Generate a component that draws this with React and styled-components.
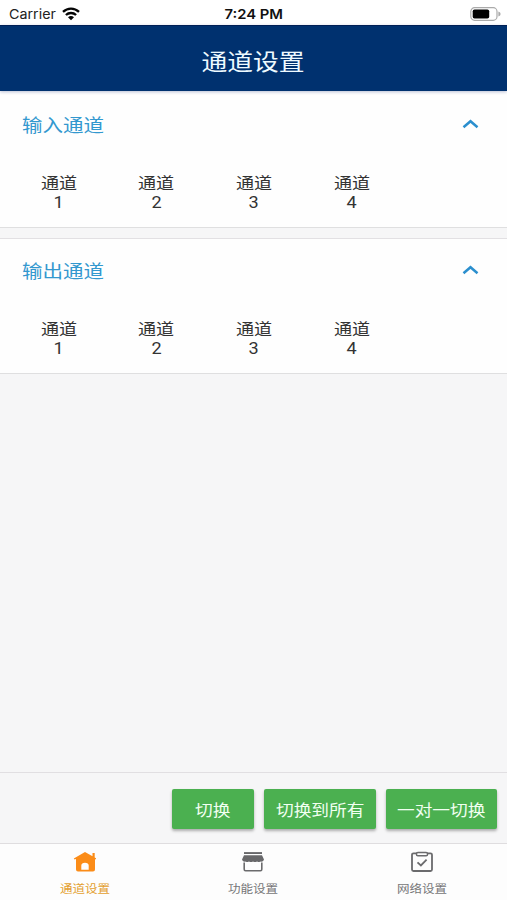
import React from "react";
import styled, { createGlobalStyle } from "styled-components";

const GlobalStyle = createGlobalStyle`
  * { box-sizing: border-box; }
  body {
    margin: 0;
    background: #f6f6f7;
    font-family: Roboto, "Noto Sans CJK SC", sans-serif;
  }
`;

const Screen = styled.div`
  display: flex;
  flex-direction: column;
  width: 100%;
  height: 900px;
  overflow: hidden;
  background: #f6f6f7;
`;

/* Wide-set lettering used across the app */
const Label = styled.span`
  display: block;
  white-space: nowrap;
  font-size: ${(p) => p.$size}px;
  line-height: ${(p) => p.$line || 20}px;
  font-weight: ${(p) => p.$weight || 400};
  transform: scaleX(${(p) => p.$stretch || 1.13});
  transform-origin: ${(p) => p.$origin || "center"};
`;

const StatusBar = styled.div`
  display: grid;
  grid-template-columns: 1fr auto 1fr;
  align-items: center;
  height: 25px;
  padding: 2px 6px 0 9px;
  background: #fff;
  color: #222;
  font-family: Inter, sans-serif;
`;

const Carrier = styled.div`
  display: flex;
  align-items: center;
  gap: 10px;
`;

const Clock = styled.div`
  padding-right: 2px;
  color: #111;
`;

const Battery = styled.div`
  display: flex;
  justify-content: flex-end;
`;

const Header = styled.header`
  display: flex;
  align-items: center;
  justify-content: center;
  height: 66px;
  padding-top: 6px;
  background: #00316f;
  border-top: 1px solid #001f55;
  box-shadow: 0 1px 3px rgba(30, 50, 120, 0.3);
  color: #eefaff;
  z-index: 1;
`;

const Content = styled.main`
  flex: 1;
  display: flex;
  flex-direction: column;
  gap: 10px;
`;

const Panel = styled.section`
  height: ${(p) => p.$height}px;
  background: #fefefe;
  border-bottom: 1px solid #dfdfe0;
  border-top: ${(p) => (p.$ruled ? "1px solid #e2e0e3" : "0")};
`;

const PanelHead = styled.div`
  display: flex;
  align-items: center;
  justify-content: space-between;
  height: 66px;
  margin-top: ${(p) => (p.$ruled ? -2 : 0)}px;
  padding: 0 28px 0 22px;
  color: #3398cf;
`;

const PanelTitle = styled.h2`
  margin: 0;
  padding-top: 3px;
  font-weight: 400;
`;

const Channels = styled.div`
  display: grid;
  grid-template-columns: repeat(4, 97.6px);
  padding: 17px 0 0 10px;
  color: #333;
`;

const Channel = styled.div`
  display: flex;
  flex-direction: column;
  align-items: center;
`;

const Actions = styled.div`
  display: flex;
  justify-content: flex-end;
  gap: 10px;
  height: 71px;
  padding: 16px 10px 0;
  border-top: 1px solid #e1dfe2;
`;

const ActionButton = styled.button`
  display: flex;
  align-items: center;
  justify-content: center;
  width: ${(p) => p.$width}px;
  height: 40px;
  padding: 4px 0 0;
  border: 0;
  border-radius: 2px;
  background: #4bb050;
  box-shadow: 0 2px 3px rgba(0, 0, 0, 0.3);
  color: #f1fff1;
  font-family: inherit;
`;

const TabBar = styled.nav`
  display: grid;
  grid-template-columns: repeat(3, 1fr);
  height: 57px;
  padding-top: 7px;
  background: #fdfdfd;
  border-top: 1px solid #dfdddf;
`;

const Tab = styled.div`
  display: flex;
  flex-direction: column;
  align-items: center;
  gap: 10px;
  padding-right: ${(p) => (p.$active ? 0 : 1)}px;
  color: ${(p) => (p.$active ? "#e3a02f" : "#767678")};
`;

const WifiIcon = () => (
  <svg width="18" height="14" viewBox="0 0 18 14" fill="none" stroke="#050505" strokeWidth="2.3">
    <path d="M1 4.9C5.6 .5 12.4 .5 17 4.9" />
    <path d="M3.9 8C6.8 5.3 11.2 5.3 14.1 8" />
    <path d="M9 13.2 6 10.2Q9 7.8 12 10.2Z" fill="#050505" stroke="none" />
  </svg>
);

const BatteryIcon = () => (
  <svg width="31" height="14" viewBox="0 0 31 14">
    <rect x=".8" y=".7" width="26.2" height="12.6" rx="3.8" fill="#fff" stroke="#aaa" strokeWidth="1.2" />
    <rect x="2.7" y="2.4" width="16.5" height="9.2" rx="1.8" fill="#000" />
    <path d="M28.4 4.6Q30.6 5.2 30.6 7T28.4 9.4Z" fill="#aaa" />
  </svg>
);

const ChevronUp = () => (
  <svg width="17" height="10" viewBox="0 0 17 10" fill="none" stroke="#2b8fce" strokeWidth="2.5">
    <path d="m1.5 8.2 7-6 7 6" />
  </svg>
);

const HomeIcon = () => (
  <svg width="24" height="22" viewBox="0 0 24 22">
    <path
      d="M12 1 .8 7.4 1.5 8.6 3 8V18.5Q3 20.5 5 20.5H20Q22 20.5 22 18.5V8L23 8.5V7.2L21.7 6.5V2H19.5V5.2ZM8.3 18.8V14.5Q8.5 11.7 12 11.7T15.7 14.5V18.8Z"
      fill="#fb8c18"
      fillRule="evenodd"
    />
  </svg>
);

const StoreIcon = () => (
  <svg width="24" height="22" viewBox="0 0 24 22">
    <path d="M3 1.1H21V3H3Z" fill="#68686a" />
    <path d="M3 4.2H21L23 8.6Q22.4 11 20 10.6 18.2 11.6 16 10.5 14 11.6 12 10.5 10 11.6 8 10.5 5.8 11.6 4 10.6 1.6 11 1 8.6Z" fill="#68686a" />
    <path d="M3.2 11.5V18.2Q3.2 19.7 4.5 19.7H19.5Q20.8 19.7 20.8 18.2V11.5" fill="none" stroke="#6b6b6d" strokeWidth="1.6" />
  </svg>
);

const ClipboardIcon = () => (
  <svg width="24" height="22" viewBox="0 0 24 22" fill="none" stroke="#6b6b6d" strokeWidth="1.8">
    <rect x="2" y="2.3" width="20" height="17.7" rx="1.5" />
    <rect x="6.5" y="1.4" width="11" height="3.4" rx="1.4" fill="#fdfdfd" strokeWidth="1.5" />
    <path d="m7.5 11.3 3.4 3.1 5.7-5.7" />
  </svg>
);

const ChannelPanel = ({ title, height, ruled }) => (
  <Panel $height={height} $ruled={ruled}>
    <PanelHead $ruled={ruled}>
      <PanelTitle>
        <Label $size={18} $stretch={1.14} $origin="left">{title}</Label>
      </PanelTitle>
      <ChevronUp />
    </PanelHead>
    <Channels>
      {[1, 2, 3, 4].map((n) => (
        <Channel key={n}>
          <Label $size={16} $line={19}>通道</Label>
          <Label $size={16} $line={19}>{n}</Label>
        </Channel>
      ))}
    </Channels>
  </Panel>
);

const actions = [
  { text: "切换", width: 82 },
  { text: "切换到所有", width: 112 },
  { text: "一对一切换", width: 111 },
];

const tabs = [
  { text: "通道设置", Icon: HomeIcon, active: true },
  { text: "功能设置", Icon: StoreIcon },
  { text: "网络设置", Icon: ClipboardIcon },
];

export default function App() {
  return (
    <Screen>
      <GlobalStyle />
      <StatusBar>
        <Carrier>
          <Label $size={13} $stretch={1.1} $origin="left">Carrier</Label>
          <WifiIcon />
        </Carrier>
        <Clock>
          <Label $size={13} $stretch={1.14} $weight={600}>7:24 PM</Label>
        </Clock>
        <Battery><BatteryIcon /></Battery>
      </StatusBar>
      <Header>
        <Label $size={22.5} $line={30} $stretch={1.145}>通道设置</Label>
      </Header>
      <Content>
        <ChannelPanel title="输入通道" height={137} />
        <ChannelPanel title="输出通道" height={136} ruled />
      </Content>
      <Actions>
        {actions.map((a) => (
          <ActionButton key={a.text} $width={a.width}>
            <Label $size={15.7}>{a.text}</Label>
          </ActionButton>
        ))}
      </Actions>
      <TabBar>
        {tabs.map(({ text, Icon, active }) => (
          <Tab key={text} $active={active}>
            <Icon />
            <Label $size={11} $line={14} $stretch={1.14}>{text}</Label>
          </Tab>
        ))}
      </TabBar>
    </Screen>
  );
}
